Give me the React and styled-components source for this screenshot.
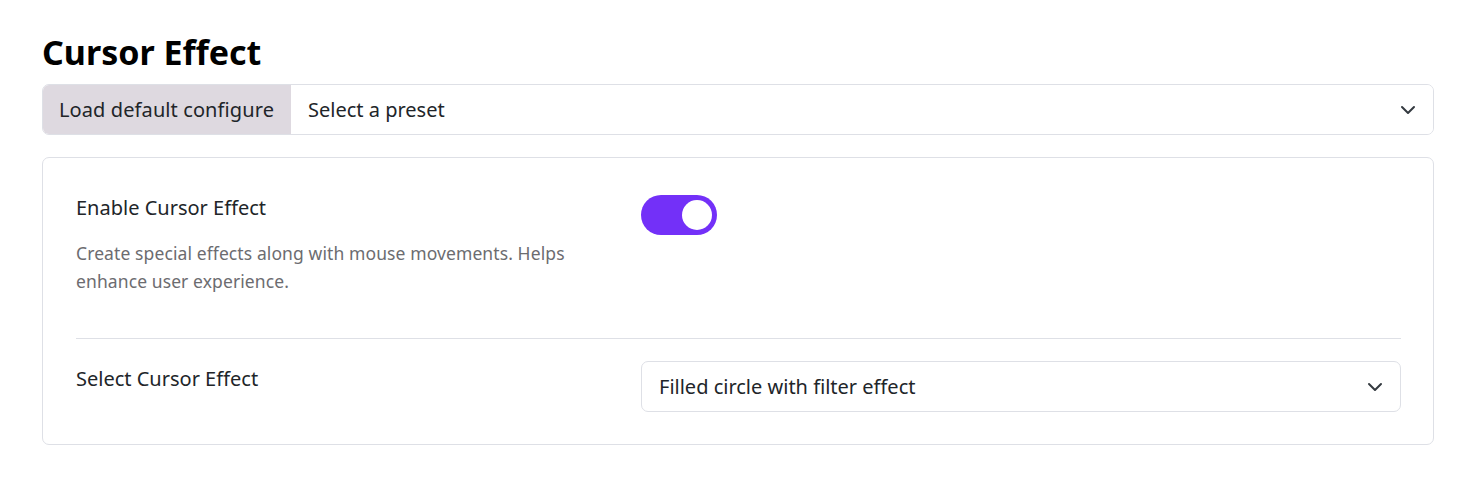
import React, { useState } from "react";
import styled, { createGlobalStyle } from "styled-components";

const GlobalStyle = createGlobalStyle`
  body {
    margin: 0;
    background: #fff;
    font-family: "Noto Sans", "Open Sans", sans-serif;
    color: #212529;
  }
`;

function Chevron() {
  return (
    <svg width="16" height="16" viewBox="0 0 16 16" fill="none">
      <path d="M2 5l6 6 6-6" stroke="#343a40" strokeWidth="2" strokeLinecap="round" strokeLinejoin="round" />
    </svg>
  );
}

function App() {
  const [on, setOn] = useState(true);
  return (
    <Page>
      <GlobalStyle />
      <Title>Cursor Effect</Title>
      <InputGroup>
        <Addon>Load default configure</Addon>
        <SelectBox flat>
          <span>Select a preset</span>
          <Chevron />
        </SelectBox>
      </InputGroup>
      <Card>
        <Row>
          <LabelCol>
            <Label>Enable Cursor Effect</Label>
            <Hint>Create special effects along with mouse movements. Helps enhance user experience.</Hint>
          </LabelCol>
          <div>
            <Switch on={on} onClick={() => setOn(!on)} />
          </div>
        </Row>
        <Divider />
        <Row>
          <LabelCol top={4}>
            <Label>Select Cursor Effect</Label>
          </LabelCol>
          <SelectBox>
            <span>Filled circle with filter effect</span>
            <Chevron />
          </SelectBox>
        </Row>
      </Card>
    </Page>
  );
}

export default App;

const Page = styled.div`
  padding: 30px 41px 40px 42px;
`;

const Title = styled.h1`
  margin: 0 0 9px;
  font-size: 34px;
  line-height: 45px;
  font-weight: 700;
  color: #000;
`;

const InputGroup = styled.div`
  display: flex;
  height: 51px;
  border: 1px solid #dee0e6;
  border-radius: 7px;
  overflow: hidden;
  box-sizing: border-box;
`;

const Addon = styled.div`
  display: flex;
  align-items: center;
  padding: 0 16px;
  width: 248px;
  box-sizing: border-box;
  background: #ded9e0;
  font-size: 20px;
  white-space: nowrap;
  letter-spacing: 0.1px;
`;

const SelectBox = styled.div`
  flex: 1;
  display: flex;
  align-items: center;
  justify-content: space-between;
  padding: 0 17px;
  height: ${(p) => (p.flat ? "49px" : "51px")};
  box-sizing: border-box;
  font-size: 20px;
  border: ${(p) => (p.flat ? "none" : "1px solid #dee0e6")};
  border-radius: ${(p) => (p.flat ? "0" : "7px")};
  background: #fff;
`;

const Card = styled.div`
  margin-top: 22px;
  border: 1px solid #dee0e6;
  border-radius: 7px;
  padding: 36px 32px 32px 33px;
`;

const Row = styled.div`
  display: grid;
  grid-template-columns: 565px 1fr;
  align-items: start;
`;

const LabelCol = styled.div`
  padding: ${(p) => p.top || 0}px 40px 0 0;
`;

const Label = styled.div`
  font-size: 20px;
  line-height: 28px;
  color: #212529;
`;

const Hint = styled.div`
  margin-top: 17px;
  font-size: 17.5px;
  line-height: 28px;
  color: #6c6c70;
  letter-spacing: 0.1px;
`;

const Switch = styled.div`
  position: relative;
  width: 76px;
  height: 40px;
  margin-top: 1px;
  border-radius: 20px;
  background: ${(p) => (p.on ? "#7330f8" : "#d0d0d6")};
  cursor: pointer;

  &::after {
    content: "";
    position: absolute;
    top: 5px;
    left: ${(p) => (p.on ? "41px" : "5px")};
    width: 30px;
    height: 30px;
    border-radius: 50%;
    background: #fff;
  }
`;

const Divider = styled.hr`
  border: none;
  border-top: 1px solid #dee0e6;
  margin: 43px 0 22px;
`;
